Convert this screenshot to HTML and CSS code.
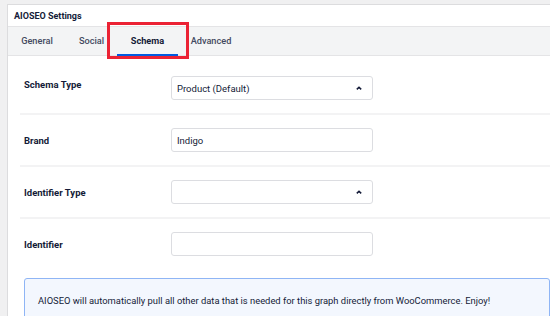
FILE: index.html
```html
<!DOCTYPE html>
<html>
<head>
<meta charset="utf-8">
<link rel="stylesheet" href="styles.css">
</head>
<body>
<div class="panel">
  <div class="header">AIOSEO Settings</div>
  <div class="tabs">
    <div class="tab tab-general">General</div>
    <div class="tab tab-social">Social</div>
    <div class="tab tab-schema active">Schema</div>
    <div class="tab tab-advanced">Advanced</div>
  </div>
  <div class="highlight"></div>
  <div class="content">
    <div class="row">
      <div class="label label-top">Schema Type</div>
      <div class="field select">
        <span>Product (Default)</span>
        <svg class="caret" width="6" height="4" viewBox="0 0 6 4"><path d="M0.8 3.4 L3 1.2 L5.2 3.4" fill="none" stroke="#141b38" stroke-width="1.5"/></svg>
      </div>
    </div>
    <div class="row">
      <div class="label">Brand</div>
      <div class="field input"><span>Indigo</span></div>
    </div>
    <div class="row">
      <div class="label">Identifier Type</div>
      <div class="field select">
        <span></span>
        <svg class="caret" width="6" height="4" viewBox="0 0 6 4"><path d="M0.8 3.4 L3 1.2 L5.2 3.4" fill="none" stroke="#141b38" stroke-width="1.5"/></svg>
      </div>
    </div>
    <div class="row row-last">
      <div class="label">Identifier</div>
      <div class="field input"><span></span></div>
    </div>
    <div class="alert">AIOSEO will automatically pull all other data that is needed for this graph directly from WooCommerce. Enjoy!</div>
  </div>
</div>
</body>
</html>
```

FILE: styles.css
```css
html, body {
  margin: 0;
  padding: 0;
}
body {
  background: #f0f0f1;
  font-family: Roboto, "Liberation Sans", sans-serif;
  color: #141b38;
  width: 550px;
  height: 316px;
  overflow: hidden;
}
.panel {
  position: relative;
  margin: 4px 0 0 7px;
  background: #fff;
  border-top: 1px solid #dcdcde;
  border-left: 1px solid #dcdcde;
  height: 311px;
  overflow: hidden;
}
.header {
  height: 21px;
  display: flex;
  align-items: center;
  padding-left: 6px;
  font-size: 9px;
  font-weight: 700;
  border-bottom: 1px solid #e4e4e6;
}
.tabs {
  display: flex;
  height: 28px;
  background: #f3f4f5;
  border-bottom: 1px solid #e4e4e6;
}
.tab {
  display: flex;
  align-items: center;
  justify-content: center;
  font-size: 9.2px;
  font-weight: 500;
  color: #434960;
  box-sizing: border-box;
  border-bottom: 2px solid transparent;
  margin-bottom: -1px;
}
.tab-general { width: 58px; }
.tab-social { width: 51px; }
.tab-schema { width: 61px; }
.tab-advanced { width: 66px; }
.tab.active {
  font-weight: 700;
  color: #141b38;
  border-bottom-color: #005ae0;
}
.highlight {
  position: absolute;
  left: 99px;
  top: 17px;
  width: 76px;
  height: 31px;
  border: 3px solid #eb2234;
}
.content {
  padding: 7px 0 0 12px;
}
.row {
  display: flex;
  align-items: center;
  height: 50px;
  padding-left: 4px;
  border-bottom: 2px solid #f3f3f4;
}
.row-last {
  border-bottom: none;
}
.label {
  width: 147px;
  font-size: 9.5px;
  font-weight: 700;
}
.label-top {
  margin-top: -8px;
}
.field {
  width: 202px;
  height: 24px;
  box-sizing: border-box;
  border: 1px solid #dcdde1;
  border-radius: 3px;
  display: flex;
  align-items: center;
  justify-content: space-between;
  padding: 0 10px 0 5px;
  font-size: 9.5px;
}
.caret {
  margin-top: -1px;
}
.alert {
  margin: 9px 0 0 4px;
  height: 60px;
  box-sizing: border-box;
  background: #f3f7fe;
  border: 1px solid #8fb5f5;
  border-radius: 3px;
  padding: 16px 0 0 13px;
  font-size: 9.4px;
  white-space: nowrap;
}
```
